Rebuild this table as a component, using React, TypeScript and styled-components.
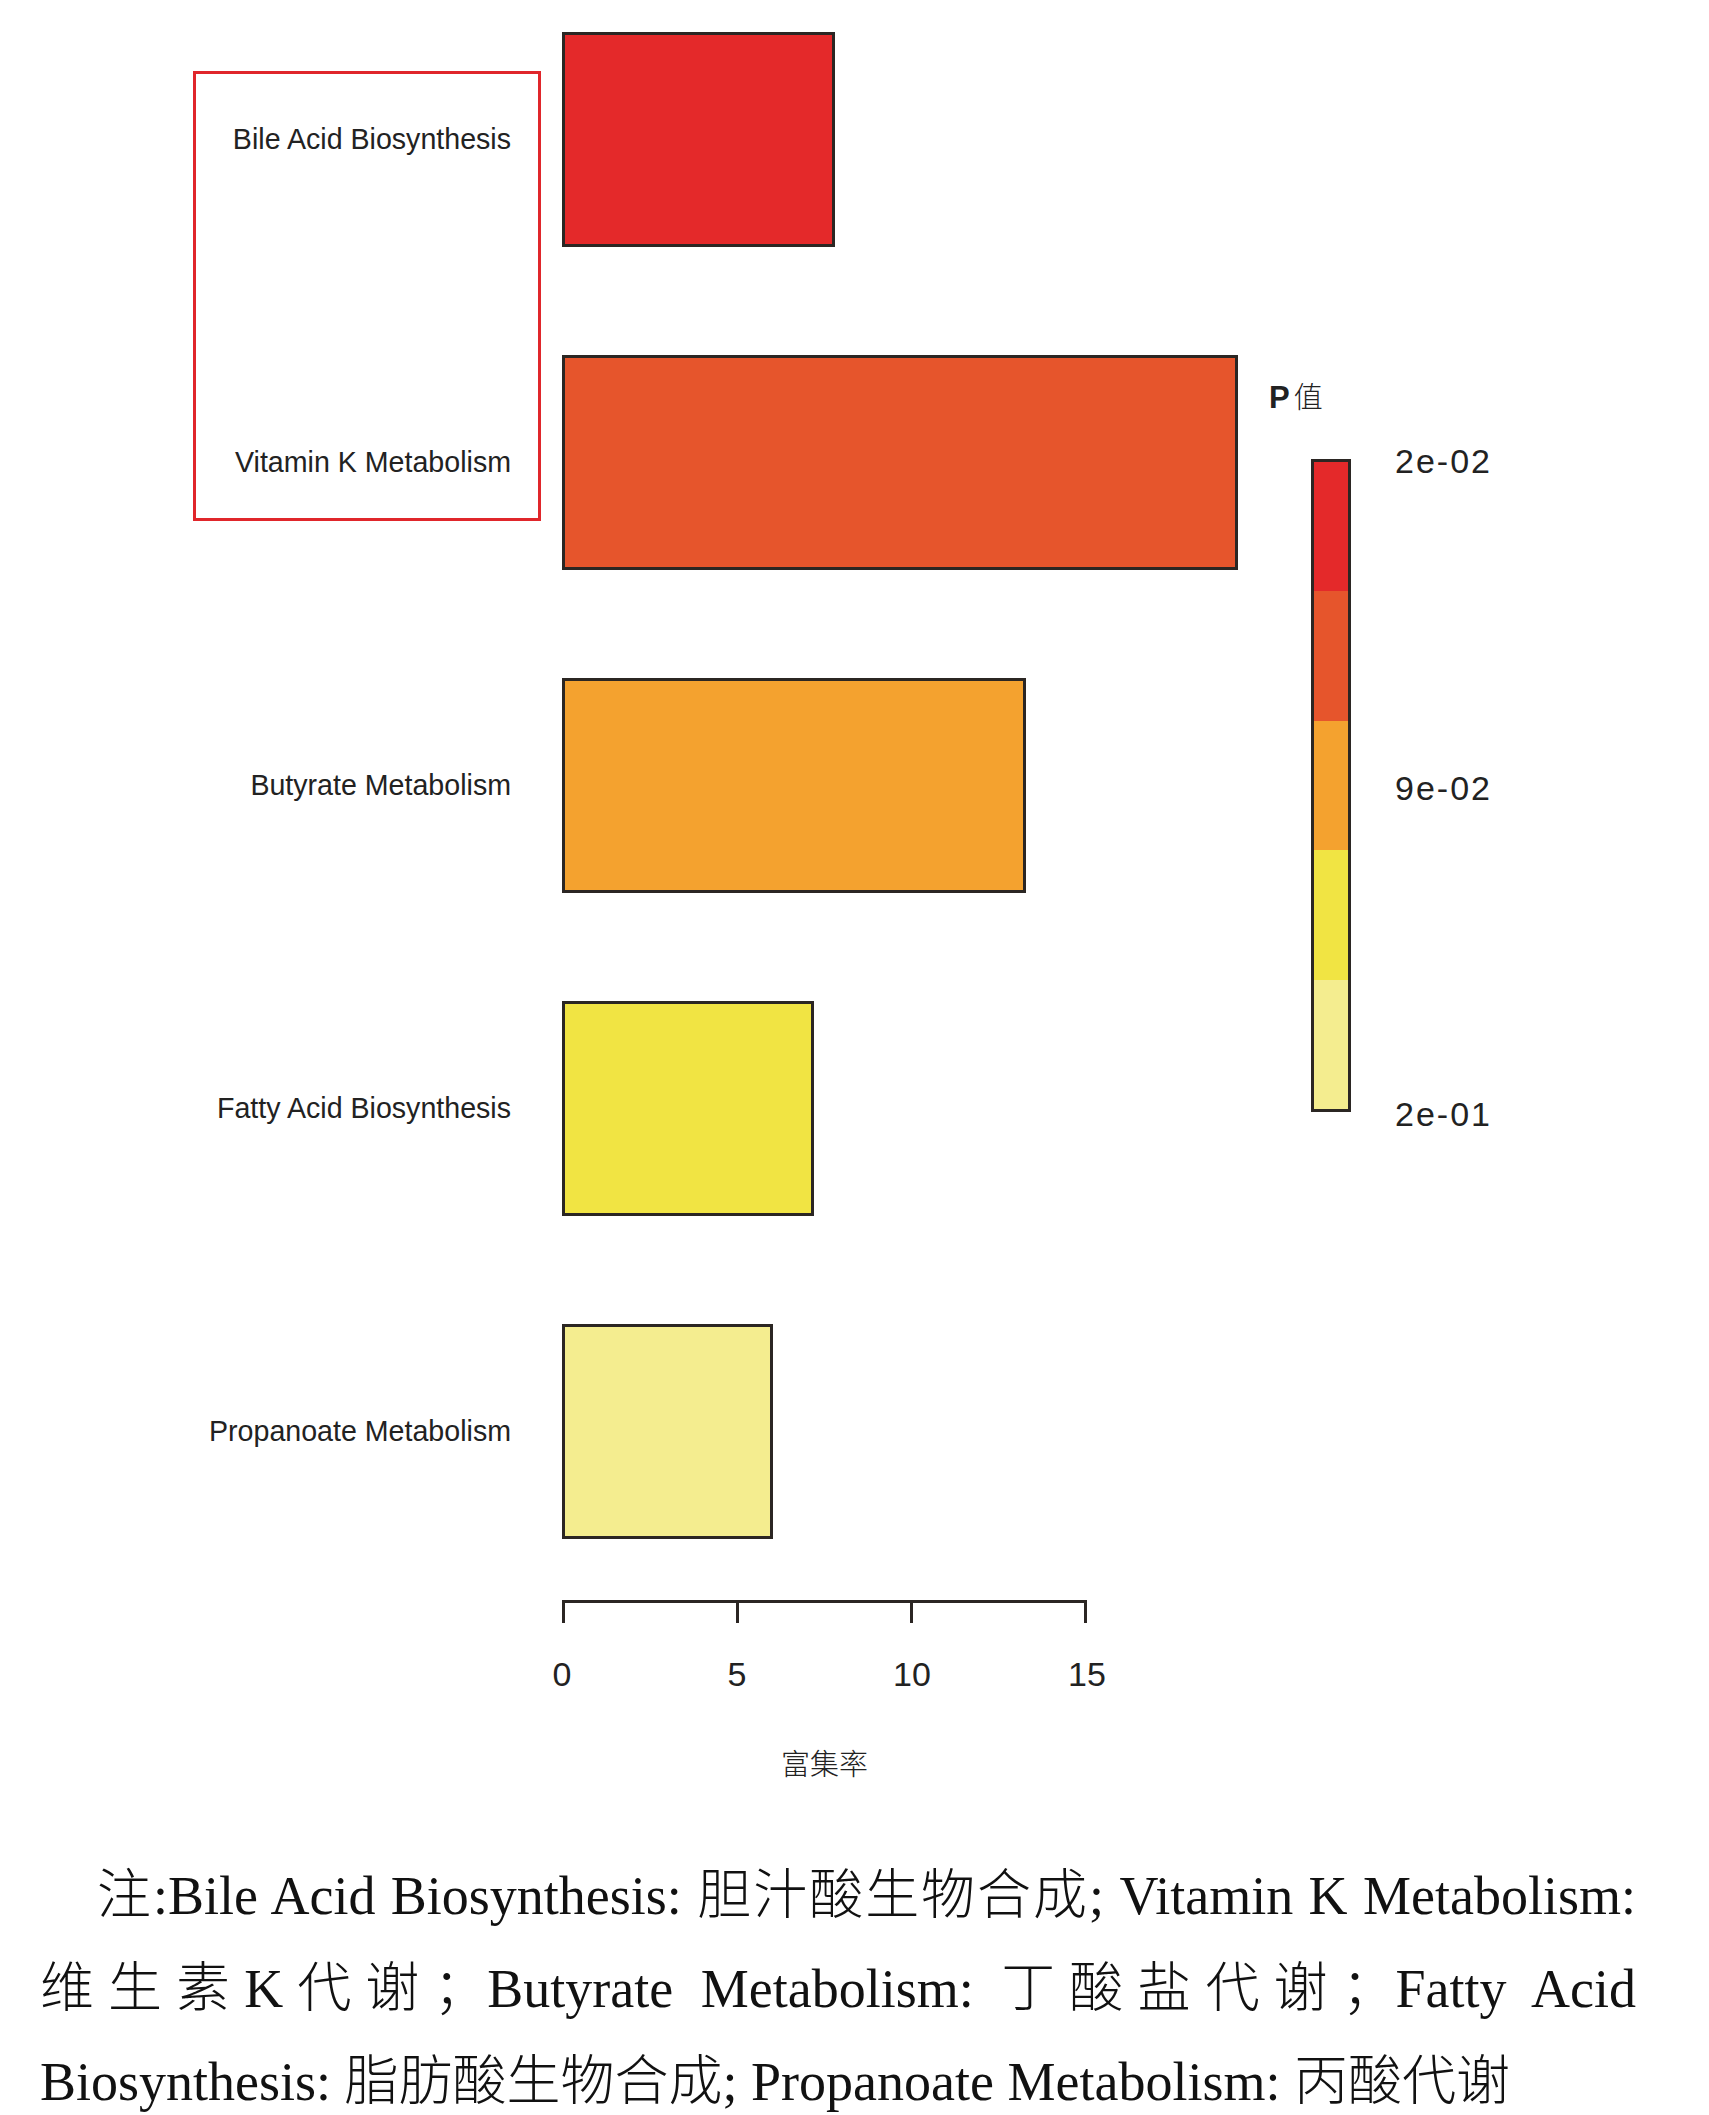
import React from "react";
import styled, { createGlobalStyle } from "styled-components";

const Global = createGlobalStyle`
  html, body { margin: 0; padding: 0; background: #ffffff; }
  body { font-family: "Liberation Sans", Arial, sans-serif; color: #222; }
`;

const Page = styled.div`
  width: 1709px;
  height: 2115px;
  padding-top: 32px;
  box-sizing: border-box;
  overflow: hidden;
  background: #fff;
`;

const Figure = styled.div`
  display: flex;
  align-items: flex-start;
`;

const PlotColumn = styled.div`
  width: 1269px;
  display: flex;
  flex-direction: column;
`;

const BarsGrid = styled.div`
  position: relative;
  display: grid;
  grid-template-columns: 562px 707px;
  grid-auto-rows: 215px;
  row-gap: 108px;
`;

const Label = styled.div`
  display: flex;
  align-items: center;
  justify-content: flex-end;
  padding-right: 51px;
  font-family: "Liberation Sans", Arial, sans-serif;
  font-size: 28.6px;
  color: #222;
  white-space: nowrap;
`;

const BarCell = styled.div`
  display: flex;
  align-items: stretch;
`;

const Bar = styled.div<{ $color: string }>`
  background: ${(p) => p.$color};
  border: 3px solid #2b2623;
  box-sizing: border-box;
  height: 100%;
`;

const Highlight = styled.div`
  position: absolute;
  left: 193px;
  top: 39px;
  width: 348px;
  height: 450px;
  border: 3px solid #e0262b;
  box-sizing: border-box;
  pointer-events: none;
`;

const Axis = styled.div`
  margin-left: 562px;
  margin-top: 61px;
  width: 525px;
  display: flex;
  flex-direction: column;
  align-items: center;
`;

const AxisLine = styled.div`
  width: 525px;
  border-top: 3px solid #2b2623;
  display: flex;
  justify-content: space-between;
`;

const Tick = styled.div`
  width: 3px;
  height: 20px;
  background: #2b2623;
`;

const TickLabels = styled.div`
  width: 585px;
  margin-top: 31px;
  display: flex;
  justify-content: space-between;
`;

const TickLabel = styled.div`
  width: 60px;
  text-align: center;
  font-family: "Liberation Sans", Arial, sans-serif;
  font-size: 34px;
  line-height: 40px;
  color: #222;
`;

const AxisTitle = styled.div`
  margin-top: 51px;
  font-family: "Liberation Serif", "Noto Sans CJK SC", serif;
  font-size: 29px;
  line-height: 34px;
  color: #222;
  text-align: center;
`;

const Legend = styled.div`
  padding-top: 346px;
  display: flex;
  flex-direction: column;
`;

const LegendTitle = styled.div`
  font-size: 29px;
  line-height: 34px;
  color: #222;
  white-space: nowrap;
  display: flex;
  align-items: baseline;
  gap: 4px;
`;

const LegendP = styled.span`
  font-family: "Liberation Sans", Arial, sans-serif;
  font-weight: 700;
  font-size: 31px;
`;

const LegendZh = styled.span`
  font-family: "Noto Sans CJK SC", serif;
  font-weight: 300;
`;

const LegendBody = styled.div`
  margin-top: 44px;
  display: flex;
  align-items: flex-start;
`;

const ColorBar = styled.div`
  margin-left: 42px;
  width: 40px;
  height: 653px;
  border: 3px solid #2b2623;
  box-sizing: border-box;
  display: flex;
  flex-direction: column;
`;

const Swatch = styled.div<{ $color: string }>`
  flex: 1;
  background: ${(p) => p.$color};
`;

const LegendTicks = styled.div`
  margin-left: 44px;
  margin-top: -19px;
  height: 695px;
  display: flex;
  flex-direction: column;
  justify-content: space-between;
`;

const LegendTick = styled.div`
  font-family: "Liberation Sans", Arial, sans-serif;
  font-size: 34px;
  line-height: 42px;
  letter-spacing: 2px;
  color: #222;
`;

const Caption = styled.div`
  margin-top: 62px;
  margin-left: 40px;
  width: 1596px;
  font-family: "Liberation Serif", "Noto Sans CJK SC", serif;
  font-size: 54px;
  line-height: 93px;
  color: #111;
`;

const CaptionLine = styled.div<{ $justify?: boolean; $indent?: number }>`
  height: 93px;
  white-space: ${(p) => (p.$justify ? "normal" : "nowrap")};
  text-indent: ${(p) => (p.$indent ? `${p.$indent}px` : "0")};
  text-align: ${(p) => (p.$justify ? "justify" : "left")};
  text-align-last: ${(p) => (p.$justify ? "justify" : "left")};
`;

const Zh = styled.span`
  font-family: "Noto Sans CJK SC", serif;
  font-weight: 300;
`;

const SCALE = 35; // px per unit

const data = [
  { name: "Bile Acid Biosynthesis", value: 7.8, color: "#e4292a" },
  { name: "Vitamin K Metabolism", value: 19.3, color: "#e6552c" },
  { name: "Butyrate Metabolism", value: 13.25, color: "#f4a22f" },
  { name: "Fatty Acid Biosynthesis", value: 7.2, color: "#f1e443" },
  { name: "Propanoate Metabolism", value: 6.03, color: "#f4ed8f" },
];

const swatches = ["#e4292a", "#e6552c", "#f4a22f", "#f1e443", "#f4ed8f"];

export default function App() {
  return (
    <>
      <Global />
      <Page>
        <Figure>
          <PlotColumn>
            <BarsGrid>
              {data.map((d) => (
                <React.Fragment key={d.name}>
                  <Label>{d.name}</Label>
                  <BarCell>
                    <Bar $color={d.color} style={{ width: `${d.value * SCALE}px` }} />
                  </BarCell>
                </React.Fragment>
              ))}
              <Highlight />
            </BarsGrid>
            <Axis>
              <AxisLine>
                <Tick />
                <Tick />
                <Tick />
                <Tick />
              </AxisLine>
              <TickLabels>
                <TickLabel>0</TickLabel>
                <TickLabel>5</TickLabel>
                <TickLabel>10</TickLabel>
                <TickLabel>15</TickLabel>
              </TickLabels>
              <AxisTitle>
                <Zh>富集率</Zh>
              </AxisTitle>
            </Axis>
          </PlotColumn>
          <Legend>
            <LegendTitle>
              <LegendP>P</LegendP>
              <LegendZh>值</LegendZh>
            </LegendTitle>
            <LegendBody>
              <ColorBar>
                {swatches.map((c) => (
                  <Swatch key={c} $color={c} />
                ))}
              </ColorBar>
              <LegendTicks>
                <LegendTick>2e-02</LegendTick>
                <LegendTick>9e-02</LegendTick>
                <LegendTick>2e-01</LegendTick>
              </LegendTicks>
            </LegendBody>
          </Legend>
        </Figure>
        <Caption>
          <CaptionLine $justify $indent={57}>
            <Zh>注</Zh>:Bile Acid Biosynthesis: <Zh>胆汁酸生物合成</Zh>; Vitamin K Metabolism:
          </CaptionLine>
          <CaptionLine $justify>
            <Zh>维生素</Zh>K<Zh>代谢；</Zh>Butyrate Metabolism: <Zh>丁酸盐代谢；</Zh>Fatty Acid
          </CaptionLine>
          <CaptionLine>
            Biosynthesis: <Zh>脂肪酸生物合成</Zh>; Propanoate Metabolism: <Zh>丙酸代谢</Zh>
          </CaptionLine>
        </Caption>
      </Page>
    </>
  );
}
